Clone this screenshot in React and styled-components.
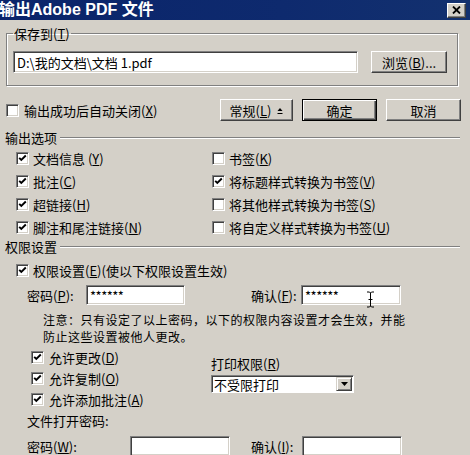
import styled, { createGlobalStyle } from "styled-components";

const Global = createGlobalStyle`
  html, body {
    margin: 0;
    padding: 0;
    background: #d4d0c8;
  }
  body {
    font-family: "Noto Sans CJK SC", "Liberation Sans", sans-serif;
    font-size: 13px;
    color: #000000;
  }
`;

const Dialog = styled.div`
  width: 470px;
  height: 455px;
  overflow: hidden;
  display: flex;
  flex-direction: column;
  background-color: #d4d0c8;
`;

const TitleBar = styled.div`
  height: 20px;
  flex-shrink: 0;
  display: flex;
  align-items: center;
  justify-content: space-between;
  background: linear-gradient(90deg, #0a246a 0%, #0e2a6e 60%, #13316f 100%);
  padding: 0 4px 0 0;
`;

const TitleText = styled.div`
  color: #ffffff;
  font-family: "Liberation Sans", "Noto Sans CJK SC", sans-serif;
  font-weight: 700;
  font-size: 16px;
  line-height: 20px;
  margin-left: -1px;
  white-space: nowrap;
`;

const CloseButton = styled.div`
  width: 17px;
  height: 13px;
  display: flex;
  align-items: center;
  justify-content: center;
  background-color: #d4d0c8;
  border: 1px solid;
  border-color: #ffffff #404040 #404040 #ffffff;
  box-shadow: inset -1px -1px 0 #808080;
`;

const GroupBox = styled.fieldset`
  margin: 6px 12px 0 6px;
  padding: 10px 12px 12px 6px;
  border: 1px solid #808080;
  box-shadow: inset 1px 1px 0 #ffffff, 1px 1px 0 #ffffff;
  min-width: 0;
`;

const Legend = styled.legend`
  padding: 0 1px;
  line-height: 15px;
  white-space: nowrap;
`;

const PathRow = styled.div`
  display: flex;
  align-items: center;
  gap: 13px;
`;

const TextBox = styled.div`
  width: ${(p) => p.$w}px;
  height: ${(p) => p.$h || 20}px;
  box-sizing: border-box;
  flex-shrink: 0;
  display: flex;
  align-items: center;
  padding: 0 3px;
  background-color: #ffffff;
  border: 1px solid;
  border-color: #808080 #ffffff #ffffff #808080;
  box-shadow: inset 1px 1px 0 #404040, inset -1px -1px 0 #d4d0c8;
  white-space: nowrap;
  line-height: 15px;
  letter-spacing: ${(p) => (p.$stars ? "-0.5px" : "0")};
`;

const Button = styled.div`
  width: ${(p) => p.$w}px;
  height: 22px;
  box-sizing: border-box;
  flex-shrink: 0;
  display: flex;
  align-items: center;
  justify-content: center;
  gap: 6px;
  background-color: #d4d0c8;
  border: 1px solid;
  border-color: ${(p) =>
    p.$default ? "#000000" : "#ffffff #404040 #404040 #ffffff"};
  box-shadow: ${(p) =>
    p.$default
      ? "inset 1px 1px 0 #ffffff, inset -1px -1px 0 #404040, inset -2px -2px 0 #808080"
      : "inset -1px -1px 0 #808080"};
  white-space: nowrap;
  line-height: 15px;
`;

const ActionRow = styled.div`
  display: flex;
  align-items: center;
  margin: 13px 0 0 6px;
  height: 22px;
`;

const ActionButtons = styled.div`
  display: flex;
  align-items: center;
  gap: 9px;
  margin-left: auto;
  margin-right: 9px;
`;

const CheckItem = styled.label`
  display: flex;
  align-items: center;
  gap: ${(p) => p.$gap || 4}px;
  height: ${(p) => p.$h || 23}px;
  white-space: nowrap;
  line-height: 15px;
`;

const Box = styled.span`
  width: 13px;
  height: 13px;
  box-sizing: border-box;
  flex-shrink: 0;
  display: flex;
  align-items: center;
  justify-content: center;
  background-color: #ffffff;
  border: 1px solid;
  border-color: #808080 #ffffff #ffffff #808080;
  box-shadow: inset 1px 1px 0 #404040, inset -1px -1px 0 #d4d0c8;
`;

const SectionHeader = styled.div`
  display: flex;
  align-items: center;
  gap: 3px;
  height: 15px;
  margin: ${(p) => p.$mt || 0}px 10px 0 5px;
  line-height: 15px;
  white-space: nowrap;
`;

const Etched = styled.div`
  flex: 1;
  height: 1px;
  background-color: #808080;
  border-bottom: 1px solid #ffffff;
`;

const OptionGrid = styled.div`
  display: grid;
  grid-template-columns: 196px 1fr;
  margin: 2px 0 0 16px;
`;

const Indented = styled.div`
  margin: ${(p) => p.$mt || 0}px 0 0 ${(p) => p.$ml || 0}px;
`;

const FieldRow = styled.div`
  display: flex;
  align-items: center;
  height: 20px;
  margin: ${(p) => p.$mt || 0}px 0 0 27px;
`;

const FieldLabel = styled.span`
  width: ${(p) => p.$w}px;
  margin-left: ${(p) => p.$ml || 0}px;
  flex-shrink: 0;
  white-space: nowrap;
  line-height: 15px;
`;

const InputWrap = styled.div`
  position: relative;
  display: flex;
`;

const Cursor = styled.svg`
  position: absolute;
  left: 65px;
  top: 6px;
`;

const Note = styled.div`
  margin: 6px 0 0 43px;
  font-size: 12px;
  line-height: 17px;
  letter-spacing: 0.5px;
  white-space: nowrap;
`;

const PermArea = styled.div`
  display: flex;
  margin: 2px 0 0 31px;
`;

const PermChecks = styled.div`
  display: flex;
  flex-direction: column;
  width: 180px;
`;

const PrintColumn = styled.div`
  display: flex;
  flex-direction: column;
  padding-top: 9px;
  gap: 4px;
`;

const Select = styled.div`
  width: 143px;
  height: 18px;
  box-sizing: border-box;
  display: flex;
  align-items: center;
  background-color: #ffffff;
  border: 1px solid;
  border-color: #808080 #ffffff #ffffff #808080;
  box-shadow: inset 1px 1px 0 #404040;
  padding: 0 1px 0 2px;
  line-height: 15px;
  white-space: nowrap;
`;

const SelectValue = styled.span`
  flex: 1;
`;

const DropButton = styled.span`
  width: 16px;
  height: 14px;
  box-sizing: border-box;
  display: flex;
  align-items: center;
  justify-content: center;
  background-color: #d4d0c8;
  border: 1px solid;
  border-color: #d4d0c8 #404040 #404040 #d4d0c8;
  box-shadow: inset 1px 1px 0 #ffffff, inset -1px -1px 0 #808080;
`;

const PlainLine = styled.div`
  margin: ${(p) => p.$mt || 0}px 0 0 27px;
  line-height: 15px;
  white-space: nowrap;
`;

const Check = ({ checked }) => (
  <Box>
    {checked && (
      <svg width="9" height="9" viewBox="0 0 9 9">
        <path d="M1.2 3.8 L3.3 6 L7.8 1.5" fill="none" stroke="#000" strokeWidth="1.9" />
      </svg>
    )}
  </Box>
);

const Key = ({ k }) => (
  <>
    (<u>{k}</u>)
  </>
);

const outputLeft = [
  ["文档信息 ", "Y", true],
  ["批注", "C", true],
  ["超链接", "H", true],
  ["脚注和尾注链接", "N", true],
];

const outputRight = [
  ["书签", "K", false],
  ["将标题样式转换为书签", "V", true],
  ["将其他样式转换为书签", "S", false],
  ["将自定义样式转换为书签", "U", false],
];

const perms = [
  ["允许更改", "D"],
  ["允许复制", "O"],
  ["允许添加批注", "A"],
];

export default function App() {
  return (
    <>
      <Global />
      <Dialog>
        <TitleBar>
          <TitleText>输出Adobe PDF 文件</TitleText>
          <CloseButton>
            <svg width="9" height="8" viewBox="0 0 9 8">
              <path d="M1 0.5 L8 7.5 M8 0.5 L1 7.5" stroke="#000" strokeWidth="1.8" />
            </svg>
          </CloseButton>
        </TitleBar>

        <GroupBox>
          <Legend>
            保存到<Key k="T" />
          </Legend>
          <PathRow>
            <TextBox $w={345} $h={22}>D:\我的文档\文档 1.pdf</TextBox>
            <Button $w={76}>
              <span>
                浏览<Key k="B" />...
              </span>
            </Button>
          </PathRow>
        </GroupBox>

        <ActionRow>
          <CheckItem $h={22} $gap={5}>
            <Check />
            <span>
              输出成功后自动关闭<Key k="X" />
            </span>
          </CheckItem>
          <ActionButtons>
            <Button $w={73}>
              <span>
                常规<Key k="L" />
              </span>
              <svg width="6" height="7" viewBox="0 0 6 7">
                <path d="M0.5 4 L3 1 L5.5 4 Z" fill="#000" />
                <path d="M0.5 6.5 H5.5" stroke="#000" strokeWidth="1" />
              </svg>
            </Button>
            <Button $w={75} $default>
              确定
            </Button>
            <Button $w={75}>取消</Button>
          </ActionButtons>
        </ActionRow>

        <SectionHeader $mt={9}>
          <span>输出选项</span>
          <Etched />
        </SectionHeader>
        <OptionGrid>
          {outputLeft.map(([label, k, on], i) => (
            <>
              <CheckItem key={"l" + i}>
                <Check checked={on} />
                <span>
                  {label}
                  <Key k={k} />
                </span>
              </CheckItem>
              <CheckItem key={"r" + i}>
                <Check checked={outputRight[i][2]} />
                <span>
                  {outputRight[i][0]}
                  <Key k={outputRight[i][1]} />
                </span>
              </CheckItem>
            </>
          ))}
        </OptionGrid>

        <SectionHeader>
          <span>权限设置</span>
          <Etched />
        </SectionHeader>
        <Indented $mt={5} $ml={16}>
          <CheckItem>
            <Check checked />
            <span>
              权限设置<Key k="E" />(使以下权限设置生效)
            </span>
          </CheckItem>
        </Indented>

        <FieldRow $mt={3}>
          <FieldLabel $w={59}>
            密码<Key k="P" />:
          </FieldLabel>
          <TextBox $w={99} $stars>
            ******
          </TextBox>
          <FieldLabel $w={50} $ml={66}>
            确认<Key k="F" />:
          </FieldLabel>
          <InputWrap>
            <TextBox $w={100} $stars>
              ******
            </TextBox>
            <Cursor width="9" height="17" viewBox="0 0 9 17">
              <path
                d="M1 1 H3.5 L4.5 2 L5.5 1 H8 M4.5 2 V15 M1 16 H3.5 L4.5 15 L5.5 16 H8 M2.5 8.5 H6.5"
                fill="none"
                stroke="#000"
                strokeWidth="1"
              />
            </Cursor>
          </InputWrap>
        </FieldRow>

        <Note>
          注意：只有设定了以上密码，以下的权限内容设置才会生效，并能
          <br />
          防止这些设置被他人更改。
        </Note>

        <PermArea>
          <PermChecks>
            {perms.map(([label, k]) => (
              <CheckItem key={k} $h={21} $gap={5}>
                <Check checked />
                <span>
                  {label}
                  <Key k={k} />
                </span>
              </CheckItem>
            ))}
          </PermChecks>
          <PrintColumn>
            <FieldLabel>
              打印权限<Key k="R" />
            </FieldLabel>
            <Select>
              <SelectValue>不受限打印</SelectValue>
              <DropButton>
                <svg width="7" height="4" viewBox="0 0 7 4">
                  <path d="M0 0 H7 L3.5 4 Z" fill="#000" />
                </svg>
              </DropButton>
            </Select>
          </PrintColumn>
        </PermArea>

        <PlainLine $mt={3}>文件打开密码:</PlainLine>
        <FieldRow $mt={8}>
          <FieldLabel $w={103}>
            密码<Key k="W" />:
          </FieldLabel>
          <TextBox $w={100} />
          <FieldLabel $w={51} $ml={21}>
            确认<Key k="I" />:
          </FieldLabel>
          <TextBox $w={100} />
        </FieldRow>
      </Dialog>
    </>
  );
}
